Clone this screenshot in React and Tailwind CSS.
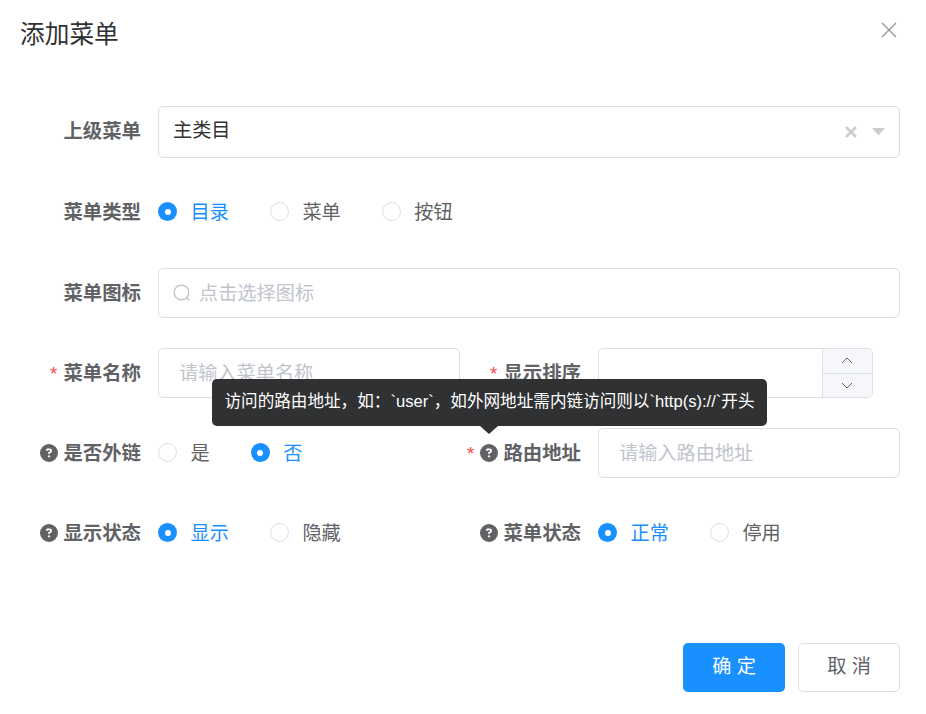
import React from "react";
import { FaCircleQuestion } from "react-icons/fa6";

const FONT = "font-['Liberation_Sans','Noto_Sans_CJK_SC',sans-serif]";

function Label({ text, star, help }) {
  return (
    <div className="flex w-[121px] shrink-0 items-center justify-end">
      {star && <span className="mr-[6px] mt-[1px] text-[19px] leading-none text-[#ff4949]">*</span>}
      {help && <FaCircleQuestion className="mr-[5px] h-[18px] w-[18px] text-[#606266]" />}
      <span className="mt-[2px] whitespace-nowrap text-[19.4px] font-bold leading-none text-[#606266]">{text}</span>
    </div>
  );
}

function Radio({ text, checked }) {
  return (
    <div className="mr-[41px] flex items-center">
      {checked ? (
        <span className="flex h-[19px] w-[19px] items-center justify-center rounded-full bg-[#1890ff]">
          <span className="h-[6px] w-[6px] rounded-full bg-white" />
        </span>
      ) : (
        <span className="h-[19px] w-[19px] rounded-full border border-[#dcdfe6] bg-white" />
      )}
      <span className={`ml-[13.5px] mt-[2px] whitespace-nowrap text-[19.2px] leading-none ${checked ? "text-[#1890ff]" : "text-[#606266]"}`}>
        {text}
      </span>
    </div>
  );
}

function Field({ label, star, help, children }) {
  return (
    <div className="flex h-[50px] items-center">
      <Label text={label} star={star} help={help} />
      <div className="ml-[17px] flex h-full min-w-0 flex-1 items-center">{children}</div>
    </div>
  );
}

function TextBox({ placeholder }) {
  return (
    <div className="flex h-[50px] w-full items-center rounded-[5px] border border-[#dcdfe6] bg-white pl-[20px] text-[19.2px] text-[#c0c4cc]">
      <span className="mt-[2px] whitespace-nowrap">{placeholder}</span>
    </div>
  );
}

export default function App() {
  return (
    <div className={`relative h-[714px] w-[926px] overflow-hidden bg-white ${FONT}`}>
      <div className="flex h-[106px] items-start justify-between pl-[20px] pr-[29px]">
        <h2 className="mt-[21px] text-[24.7px] font-normal leading-[28px] text-[#303133]">添加菜单</h2>
        <svg className="mt-[22px]" width="16" height="16" viewBox="0 0 16 16" fill="none" stroke="#909399" strokeWidth="1.3">
          <path d="M1 1l14 14M15 1L1 15" />
        </svg>
      </div>

      <div className="w-[900px] pl-[20px]">
        {/* parent menu select */}
        <div className="flex h-[52px] items-center">
          <div className="-mt-[3px]">
            <Label text="上级菜单" />
          </div>
          <div className="ml-[17px] flex h-[52px] flex-1 items-center justify-between rounded-[5px] border border-[#dcdcdc] bg-white pl-[14px] pr-[14px] text-[19.2px] text-[#333333]">
            <span className="-mt-[2px]">主类目</span>
            <div className="flex items-center gap-[15px]">
              <svg width="12" height="12" viewBox="0 0 12 12" fill="none" stroke="#cccccc" strokeWidth="2.6">
                <path d="M1 1l10 10M11 1L1 11" />
              </svg>
              <svg width="13" height="8" viewBox="0 0 13 8" fill="#cccccc">
                <path d="M0 0h13L6.5 7.5z" />
              </svg>
            </div>
          </div>
        </div>

        <div className="mt-[29px]">
          <Field label="菜单类型">
            <Radio text="目录" checked />
            <Radio text="菜单" />
            <Radio text="按钮" />
          </Field>
        </div>

        <div className="mt-[31px]">
          <Field label="菜单图标">
            <div className="flex h-[50px] w-full items-center rounded-[5px] border border-[#dcdfe6] bg-white pl-[14px] text-[19.2px] text-[#c0c4cc]">
              <svg width="18" height="18" viewBox="0 0 18 18" fill="none" stroke="#c0c4cc" strokeWidth="1.4">
                <circle cx="8.5" cy="8.5" r="7.3" />
                <path d="M13.8 13.8l2.6 2.6" />
              </svg>
              <span className="ml-[8px] mt-[2px] whitespace-nowrap">点击选择图标</span>
            </div>
          </Field>
        </div>

        <div className="mt-[30px] grid grid-cols-2 gap-y-[30px]">
          <Field label="菜单名称" star>
            <TextBox placeholder="请输入菜单名称" />
          </Field>
          <Field label="显示排序" star>
            <div className="flex h-[50px] w-[275px] justify-end rounded-[5px] border border-[#dcdfe6] bg-white">
              <div className="flex w-[50px] flex-col overflow-hidden rounded-r-[4px] border-l border-[#dcdfe6] bg-[#f5f7fa]">
                <div className="flex flex-1 items-center justify-center border-b border-[#dcdfe6]">
                  <svg className="-ml-[1px]" width="12" height="7" viewBox="0 0 12 7" fill="none" stroke="#606266" strokeWidth="1">
                    <path d="M1 6l5-5 5 5" />
                  </svg>
                </div>
                <div className="flex flex-1 items-center justify-center">
                  <svg className="-ml-[1px]" width="12" height="7" viewBox="0 0 12 7" fill="none" stroke="#606266" strokeWidth="1">
                    <path d="M1 1l5 5 5-5" />
                  </svg>
                </div>
              </div>
            </div>
          </Field>

          <Field label="是否外链" help>
            <Radio text="是" />
            <Radio text="否" checked />
          </Field>
          <Field label="路由地址" star help>
            <TextBox placeholder="请输入路由地址" />
          </Field>

          <Field label="显示状态" help>
            <Radio text="显示" checked />
            <Radio text="隐藏" />
          </Field>
          <Field label="菜单状态" help>
            <Radio text="正常" checked />
            <Radio text="停用" />
          </Field>
        </div>
      </div>

      <div className="mt-[85px] flex justify-end gap-[13px] pr-[26px]">
        <button className="h-[49px] w-[102px] rounded-[5px] bg-[#1890ff] text-[19.2px] text-white">确 定</button>
        <button className="h-[49px] w-[102px] rounded-[5px] border border-[#dcdfe6] bg-white text-[19.2px] text-[#606266]">取 消</button>
      </div>

      {/* hover tooltip for the route field */}
      <div className="absolute left-[212px] top-[379px] flex h-[47px] w-[555px] items-center justify-center rounded-[5px] bg-[#303133] text-[16.6px] whitespace-nowrap text-white">
        访问的路由地址，如：`user`，如外网地址需内链访问则以`http(s)://`开头
        <span className="absolute left-[268px] top-[47px] h-0 w-0 border-x-[9px] border-t-[8px] border-x-transparent border-t-[#303133]" />
      </div>
    </div>
  );
}
